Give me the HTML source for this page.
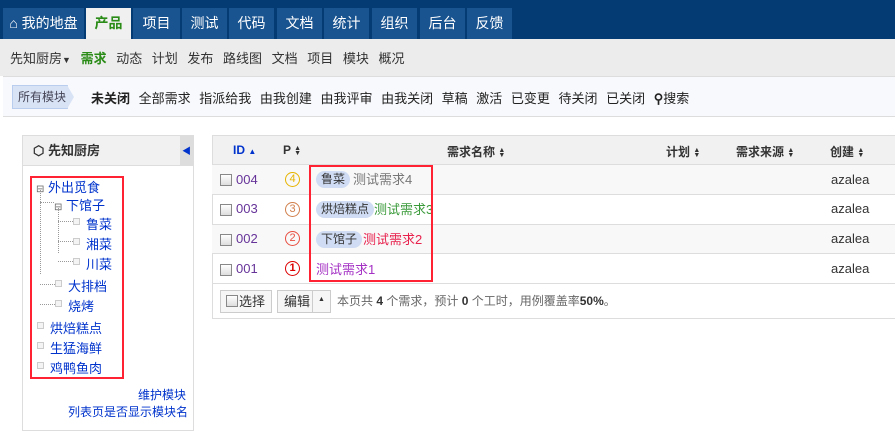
<!DOCTYPE html>
<html><head><meta charset="utf-8"><style>
*{box-sizing:border-box;margin:0;padding:0}
body{width:895px;height:436px;overflow:hidden;background:#fff;font-family:"Liberation Sans","Noto Sans CJK SC",sans-serif;font-size:13px;color:#333;position:relative}
.a{position:absolute;white-space:nowrap}
#top{position:absolute;left:0;top:0;width:895px;height:39px;background:#033b72}
.tab{position:absolute;top:8px;height:31px;background:#1a5490;color:#fff;font-size:14px;line-height:31px;text-align:center}
#sub{position:absolute;left:0;top:39px;width:895px;height:37px;background:#ececec}
#flt{position:absolute;left:3px;top:76px;width:892px;height:41px;background:#f8f9fc;border-top:1px solid #ddd;border-bottom:1px solid #ddd}
.lk{color:#03c}
.side{position:absolute;left:22px;top:135px;width:172px;height:296px;border:1px solid #ddd;background:#fff}
.red{position:absolute;border:2px solid #f23}
.row{position:absolute;left:212px;width:683px;height:30px;border-top:1px solid #ddd}
.cb{position:absolute;width:12px;height:12px;border:1px solid #888;background:linear-gradient(#fff,#ddd)}
.pri{position:absolute;width:15px;height:15px;border-radius:50%;border:1.5px solid;font-size:11px;line-height:12px;text-align:center}
.tag{position:absolute;height:17px;border-radius:9px;background:#cfdcf3;color:#333;font-size:12px;line-height:17px;padding:0 5px}
.nm{position:absolute;line-height:17px;font-size:13px;white-space:nowrap}
.sq{position:absolute;width:7px;height:7px;border:1px solid #ccc;background:#f4f4f4}
.dv{position:absolute;border-left:1px dotted #999}
.dh{position:absolute;border-top:1px dotted #999}
.tree{position:absolute;color:#03c;font-size:13px}
.s{display:inline-block;font-size:7px;line-height:5px;vertical-align:middle;width:8px}
</style></head><body>
<div id="top"></div>
<div class="tab" style="left:3px;width:81px">&#8962; 我的地盘</div>
<div class="tab" style="left:86px;width:45px;background:#f0f0f0;color:#2a8c17;font-weight:bold">产品</div>
<div class="tab" style="left:133px;width:47px">项目</div>
<div class="tab" style="left:182px;width:45px">测试</div>
<div class="tab" style="left:229px;width:45px">代码</div>
<div class="tab" style="left:277px;width:45px">文档</div>
<div class="tab" style="left:324px;width:45px">统计</div>
<div class="tab" style="left:372px;width:45px">组织</div>
<div class="tab" style="left:420px;width:45px">后台</div>
<div class="tab" style="left:467px;width:45px">反馈</div>
<div id="sub"></div>
<div class="a" style="left:10px;top:48px;font-size:13px;word-spacing:6px">先知厨房<span style="font-size:9px">&#9660;</span> <b style="color:#2a8c17">需求</b> 动态 计划 发布 路线图 文档 项目 模块 概况</div>
<div id="flt"></div>
<div class="a" style="left:12px;top:85px;width:56px;height:24px;background:#d8e3f6;border:1px solid #b9cdee;color:#445;font-size:12px;line-height:22px;padding-left:5px">所有模块</div>
<div class="a" style="left:67px;top:85px;width:0;height:0;border-top:12px solid transparent;border-bottom:12px solid transparent;border-left:7px solid #d8e3f6"></div>
<div class="a" style="left:91px;top:88px;font-size:13px;color:#222;word-spacing:5px"><b>未关闭</b> 全部需求 指派给我 由我创建 由我评审 由我关闭 草稿 激活 已变更 待关闭 已关闭 <b>&#9906;</b>搜索</div>
<div class="side">
<div style="height:30px;background:#f1f1f1;border-bottom:1px solid #ddd;font-weight:bold;font-size:13px;line-height:29px;padding-left:10px">&#11041; 先知厨房</div>
<div style="position:absolute;right:0;top:0;width:13px;height:30px;background:#ddd;color:#03c;font-size:9px;line-height:30px;text-align:center">&#9664;</div>
</div>
<div class="tree" style="left:36px;top:177px"><span style="font-size:10px;color:#666">&#8863;</span> 外出觅食</div>
<div class="tree" style="left:54px;top:195px"><span style="font-size:10px;color:#666">&#8863;</span> 下馆子</div>
<div class="tree" style="left:86px;top:214px">鲁菜</div>
<div class="tree" style="left:86px;top:234px">湘菜</div>
<div class="tree" style="left:86px;top:254px">川菜</div>
<div class="tree" style="left:68px;top:276px">大排档</div>
<div class="tree" style="left:68px;top:296px">烧烤</div>
<div class="tree" style="left:50px;top:318px">烘焙糕点</div>
<div class="tree" style="left:50px;top:338px">生猛海鲜</div>
<div class="tree" style="left:50px;top:358px">鸡鸭鱼肉</div>
<div class="dv" style="left:40px;top:190px;height:84px"></div>
<div class="dv" style="left:58px;top:208px;height:45px"></div>
<div class="dh" style="left:40px;top:202px;width:14px"></div>
<div class="dh" style="left:58px;top:221px;width:15px"></div>
<div class="dh" style="left:58px;top:241px;width:15px"></div>
<div class="dh" style="left:58px;top:261px;width:15px"></div>
<div class="dh" style="left:40px;top:284px;width:15px"></div>
<div class="dh" style="left:40px;top:304px;width:15px"></div>
<div class="sq" style="left:73px;top:218px"></div><div class="sq" style="left:73px;top:238px"></div><div class="sq" style="left:73px;top:258px"></div>
<div class="sq" style="left:55px;top:280px"></div><div class="sq" style="left:55px;top:300px"></div>
<div class="sq" style="left:37px;top:322px"></div><div class="sq" style="left:37px;top:342px"></div><div class="sq" style="left:37px;top:362px"></div>
<div class="red" style="left:30px;top:176px;width:94px;height:203px"></div>
<div class="a lk" style="left:138px;top:386px;font-size:12px">维护模块</div>
<div class="a lk" style="left:68px;top:403px;font-size:12px">列表页是否显示模块名</div>
<div class="a" style="left:212px;top:135px;width:683px;height:184px;border:1px solid #ddd;border-right:none"></div>
<div class="a" style="left:213px;top:136px;width:682px;height:28px;background:#f1f1f1"></div>
<div class="a" style="left:233px;top:143px;font-weight:bold;font-size:12px;color:#03c">ID <span style="font-size:8px">&#9650;</span></div>
<div class="a" style="left:283px;top:143px;font-weight:bold;font-size:12px">P <span class="s">&#9650;<br>&#9660;</span></div>
<div class="a" style="left:447px;top:143px;font-weight:bold;font-size:12px">需求名称 <span class="s">&#9650;<br>&#9660;</span></div>
<div class="a" style="left:666px;top:143px;font-weight:bold;font-size:12px">计划 <span class="s">&#9650;<br>&#9660;</span></div>
<div class="a" style="left:736px;top:143px;font-weight:bold;font-size:12px">需求来源 <span class="s">&#9650;<br>&#9660;</span></div>
<div class="a" style="left:830px;top:143px;font-weight:bold;font-size:12px">创建 <span class="s">&#9650;<br>&#9660;</span></div>
<div class="row" style="top:164px;background:#f8f8f8"></div>
<div class="row" style="top:194px"></div>
<div class="row" style="top:224px;background:#f8f8f8"></div>
<div class="row" style="top:253px"></div>
<div class="row" style="top:283px;height:1px"></div>
<div class="cb" style="left:220px;top:174px"></div><div class="a" style="left:236px;top:172px;color:#639">004</div>
<div class="cb" style="left:220px;top:204px"></div><div class="a" style="left:236px;top:201px;color:#639">003</div>
<div class="cb" style="left:220px;top:234px"></div><div class="a" style="left:236px;top:231px;color:#639">002</div>
<div class="cb" style="left:220px;top:264px"></div><div class="a" style="left:236px;top:261px;color:#639">001</div>
<div class="pri" style="left:285px;top:172px;color:#e6b400;border-color:#e6b400">4</div>
<div class="pri" style="left:285px;top:202px;color:#d17f4c;border-color:#d17f4c">3</div>
<div class="pri" style="left:285px;top:231px;color:#e84e40;border-color:#e84e40">2</div>
<div class="pri" style="left:285px;top:261px;color:#d00;border-color:#d00;font-weight:bold">1</div>
<div class="tag" style="left:316px;top:171px">鲁菜</div><div class="nm" style="left:353px;top:171px;color:#777">测试需求4</div>
<div class="tag" style="left:316px;top:201px">烘焙糕点</div><div class="nm" style="left:374px;top:201px;color:#3a9a3a">测试需求3</div>
<div class="tag" style="left:316px;top:231px">下馆子</div><div class="nm" style="left:363px;top:231px;color:#e8214d">测试需求2</div>
<div class="nm" style="left:316px;top:261px;color:#a431c4">测试需求1</div>
<div class="red" style="left:309px;top:165px;width:124px;height:117px"></div>
<div class="a" style="left:831px;top:172px">azalea</div>
<div class="a" style="left:831px;top:201px">azalea</div>
<div class="a" style="left:831px;top:231px">azalea</div>
<div class="a" style="left:831px;top:261px">azalea</div>
<div class="a" style="left:220px;top:290px;width:52px;height:23px;border:1px solid #ccc;background:#f6f6f6;line-height:21px;padding-left:18px">选择</div>
<div class="cb" style="left:226px;top:295px"></div>
<div class="a" style="left:277px;top:290px;width:54px;height:23px;border:1px solid #ccc;background:#f6f6f6;line-height:21px;padding-left:6px">编辑</div>
<div class="a" style="left:312px;top:290px;width:1px;height:23px;background:#ccc"></div>
<div class="a" style="left:318px;top:296px;font-size:7px">&#9650;</div>
<div class="a" style="left:337px;top:292px;font-size:12px;color:#666">本页共 <b style="color:#333">4</b> 个需求，预计 <b style="color:#333">0</b> 个工时，用例覆盖率<b style="color:#333">50%</b>。</div>
</body></html>
